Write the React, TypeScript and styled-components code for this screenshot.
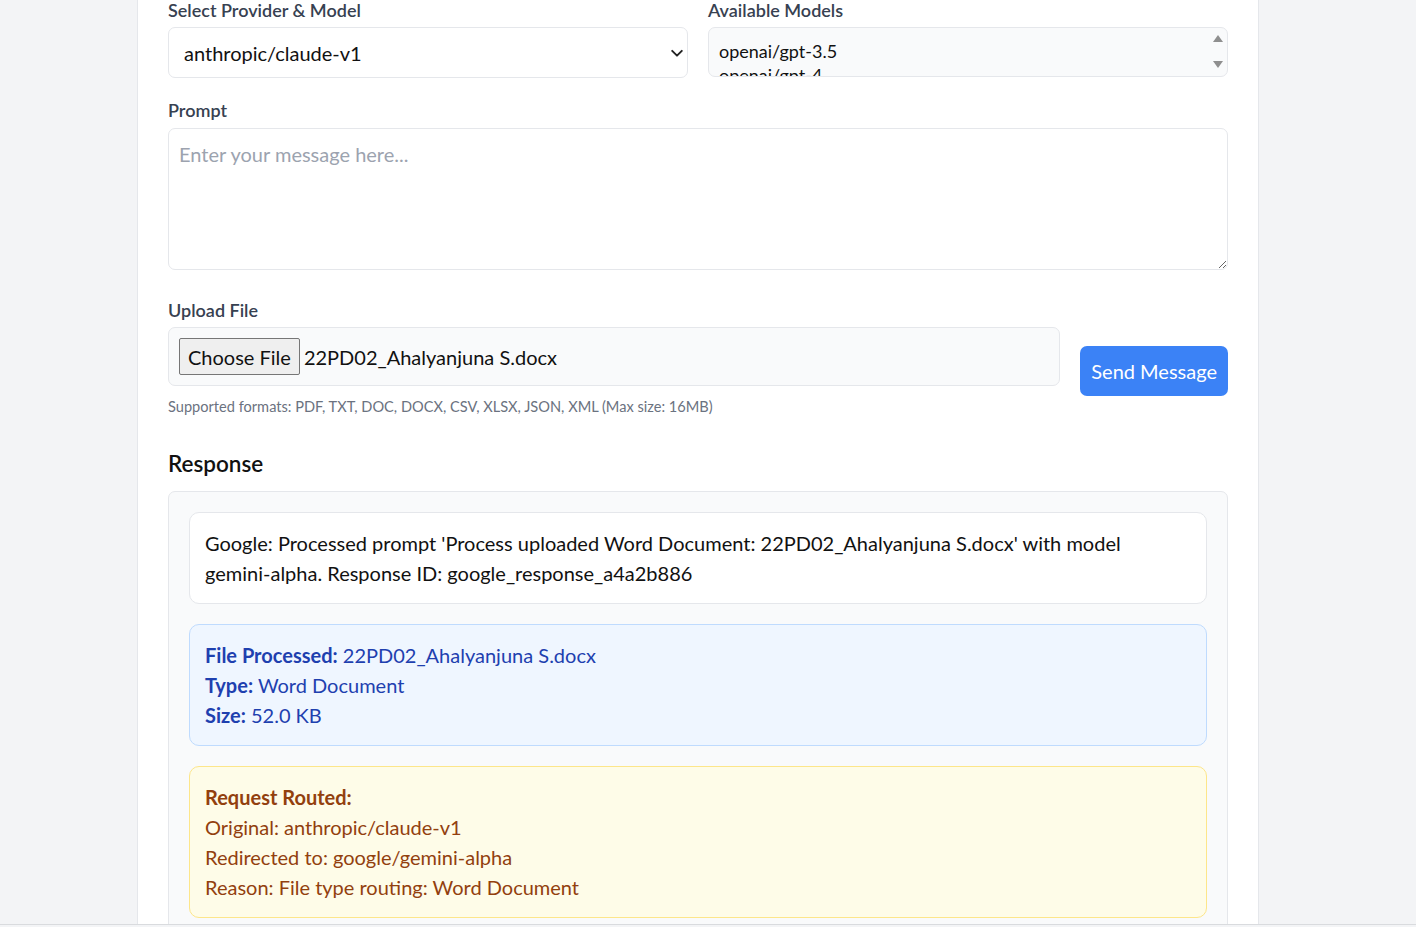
import React from "react";
import styled, { createGlobalStyle } from "styled-components";

const FONT = `"Segoe UI", Lato, "Noto Sans", Arial, sans-serif`;

const GlobalStyle = createGlobalStyle`
  html, body {
    margin: 0;
    padding: 0;
    background: #f3f4f6;
    font-family: ${FONT};
    color: #111827;
  }
  * { box-sizing: border-box; }
`;

const Page = styled.div`
  height: 927px;
  overflow: hidden;
  display: flex;
  flex-direction: column;
`;

const Main = styled.div`
  flex: 1;
  min-height: 0;
  overflow: hidden;
  display: flex;
  justify-content: center;
  padding-right: 20px;
`;

const Card = styled.div`
  width: 1122px;
  background: #ffffff;
  border-left: 1px solid #e5e7eb;
  border-right: 1px solid #e5e7eb;
  padding: 0 30px;
  display: flex;
  flex-direction: column;
`;

const BottomBar = styled.div`
  height: 3px;
  flex: none;
  border-top: 1px solid #d9dbde;
  background: #f3f4f6;
`;

const TopGrid = styled.div`
  display: grid;
  grid-template-columns: 1fr 1fr;
  gap: 20px;
  margin-top: -2px;
`;

const Field = styled.div<{ $mt?: number }>`
  display: flex;
  flex-direction: column;
  margin-top: ${(p) => p.$mt ?? 0}px;
`;

const Label = styled.label<{ $mb?: number; $lh?: number }>`
  display: block;
  font-size: 18px;
  line-height: ${(p) => p.$lh ?? 25}px;
  font-weight: 600;
  color: #374151;
  margin-bottom: ${(p) => p.$mb ?? 5}px;
`;

const SelectWrap = styled.div`
  position: relative;
  height: 51px;
`;

const Select = styled.select`
  appearance: none;
  -webkit-appearance: none;
  width: 100%;
  height: 51px;
  border: 1px solid #e5e7eb;
  border-radius: 7px;
  background: #ffffff;
  padding: 0 40px 0 15px;
  font-family: ${FONT};
  font-size: 20px;
  color: #111111;
  outline: none;
`;

const Chevron = styled.svg`
  position: absolute;
  right: 4px;
  top: 19px;
  pointer-events: none;
`;

const ListBox = styled.div`
  height: 50px;
  border: 1px solid #e5e7eb;
  border-radius: 7px;
  background: #f9fafb;
  display: flex;
  overflow: hidden;
`;

const ListOptions = styled.div`
  flex: 1;
  padding: 11px 0 0 10px;
  display: flex;
  flex-direction: column;
`;

const ListOption = styled.div`
  font-size: 18px;
  line-height: 24px;
  color: #111111;
  white-space: nowrap;
`;

const ScrollTrack = styled.div`
  width: 17px;
  margin-right: 1px;
  display: flex;
  flex-direction: column;
  justify-content: space-between;
  align-items: center;
  padding: 7px 0 8px;
`;

const TextArea = styled.textarea`
  width: 100%;
  height: 142px;
  border: 1px solid #e5e7eb;
  border-radius: 7px;
  background: #ffffff;
  padding: 10px;
  font-family: ${FONT};
  font-size: 20px;
  line-height: 30px;
  color: #111827;
  resize: vertical;
  outline: none;
  display: block;
  &::placeholder {
    color: #9ca3af;
  }
`;

const UploadRow = styled.div`
  display: flex;
  gap: 20px;
  align-items: flex-start;
  margin-top: 30px;
`;

const UploadCol = styled.div`
  flex: 1;
  display: flex;
  flex-direction: column;
`;

const FileBox = styled.div`
  height: 59px;
  border: 1px solid #e5e7eb;
  border-radius: 7px;
  background: #f9fafb;
  padding: 0 10px;
  display: flex;
  align-items: center;
  gap: 4px;
`;

const ChooseButton = styled.span`
  height: 37px;
  display: inline-flex;
  align-items: center;
  padding: 0 8px;
  border: 1px solid #767676;
  border-radius: 2px;
  background: #efefef;
  font-size: 20px;
  color: #111111;
`;

const FileName = styled.span`
  font-size: 20px;
  color: #111111;
`;

const Help = styled.p`
  margin: 11px 0 0;
  font-size: 14.6px;
  line-height: 20px;
  color: #6b7280;
`;

const SendButton = styled.button`
  margin-top: 46px;
  height: 50px;
  padding: 0 11px;
  border: none;
  border-radius: 7px;
  background: #3b82f6;
  color: #ffffff;
  font-family: ${FONT};
  font-size: 20px;
  line-height: 30px;
  white-space: nowrap;
`;

const Heading = styled.h3`
  margin: 29px 0 10px;
  font-size: 22.5px;
  line-height: 35px;
  font-weight: 600;
  color: #111111;
`;

const ResponseBox = styled.div`
  border: 1px solid #e5e7eb;
  border-radius: 7px;
  background: #f9fafb;
  padding: 20px;
  display: flex;
  flex-direction: column;
  gap: 20px;
`;

type Tone = "plain" | "info" | "warn";

const toneStyles: Record<Tone, { bg: string; border: string; color: string }> = {
  plain: { bg: "#ffffff", border: "#e5e7eb", color: "#111111" },
  info: { bg: "#eff6ff", border: "#bfdbfe", color: "#1e40af" },
  warn: { bg: "#fefce8", border: "#fde68a", color: "#92400e" },
};

const Note = styled.div<{ $tone: Tone }>`
  padding: 15px;
  border-radius: 10px;
  border: 1px solid ${(p) => toneStyles[p.$tone].border};
  background: ${(p) => toneStyles[p.$tone].bg};
  color: ${(p) => toneStyles[p.$tone].color};
  font-size: 20px;
  line-height: 30px;
`;

const Line = styled.div``;

const Strong = styled.strong`
  font-weight: 700;
`;

const Arrow = ({ up }: { up?: boolean }) => (
  <svg width="10" height="7" viewBox="0 0 10 7">
    <polygon points={up ? "5,0 10,7 0,7" : "0,0 10,0 5,7"} fill="#8f8f8f" />
  </svg>
);

export default function App() {
  return (
    <Page>
      <GlobalStyle />
      <Main>
        <Card>
          <TopGrid>
            <Field>
              <Label $mb={4}>Select Provider &amp; Model</Label>
              <SelectWrap>
                <Select defaultValue="anthropic/claude-v1">
                  <option>openai/gpt-3.5</option>
                  <option>openai/gpt-4</option>
                  <option>anthropic/claude-v1</option>
                  <option>google/gemini-alpha</option>
                </Select>
                <Chevron width="14" height="14" viewBox="0 0 16 16">
                  <path
                    d="M2.5 5.5 L8 11 L13.5 5.5"
                    fill="none"
                    stroke="#222"
                    strokeWidth="2.2"
                    strokeLinecap="round"
                    strokeLinejoin="round"
                  />
                </Chevron>
              </SelectWrap>
            </Field>
            <Field>
              <Label $mb={4}>Available Models</Label>
              <ListBox>
                <ListOptions>
                  <ListOption>openai/gpt-3.5</ListOption>
                  <ListOption>openai/gpt-4</ListOption>
                  <ListOption>anthropic/claude-v1</ListOption>
                </ListOptions>
                <ScrollTrack>
                  <Arrow up />
                  <Arrow />
                </ScrollTrack>
              </ListBox>
            </Field>
          </TopGrid>

          <Field $mt={20}>
            <Label $mb={5}>Prompt</Label>
            <TextArea placeholder="Enter your message here..." />
          </Field>

          <UploadRow>
            <UploadCol>
              <Label $lh={20} $mb={7}>Upload File</Label>
              <FileBox>
                <ChooseButton>Choose File</ChooseButton>
                <FileName>22PD02_Ahalyanjuna S.docx</FileName>
              </FileBox>
              <Help>
                Supported formats: PDF, TXT, DOC, DOCX, CSV, XLSX, JSON, XML (Max size: 16MB)
              </Help>
            </UploadCol>
            <SendButton>Send Message</SendButton>
          </UploadRow>

          <Heading>Response</Heading>
          <ResponseBox>
            <Note $tone="plain">
              Google: Processed prompt 'Process uploaded Word Document: 22PD02_Ahalyanjuna S.docx' with
              model gemini-alpha. Response ID: google_response_a4a2b886
            </Note>
            <Note $tone="info">
              <Line>
                <Strong>File Processed:</Strong> 22PD02_Ahalyanjuna S.docx
              </Line>
              <Line>
                <Strong>Type:</Strong> Word Document
              </Line>
              <Line>
                <Strong>Size:</Strong> 52.0 KB
              </Line>
            </Note>
            <Note $tone="warn">
              <Line>
                <Strong>Request Routed:</Strong>
              </Line>
              <Line>Original: anthropic/claude-v1</Line>
              <Line>Redirected to: google/gemini-alpha</Line>
              <Line>Reason: File type routing: Word Document</Line>
            </Note>
          </ResponseBox>
        </Card>
      </Main>
      <BottomBar />
    </Page>
  );
}
